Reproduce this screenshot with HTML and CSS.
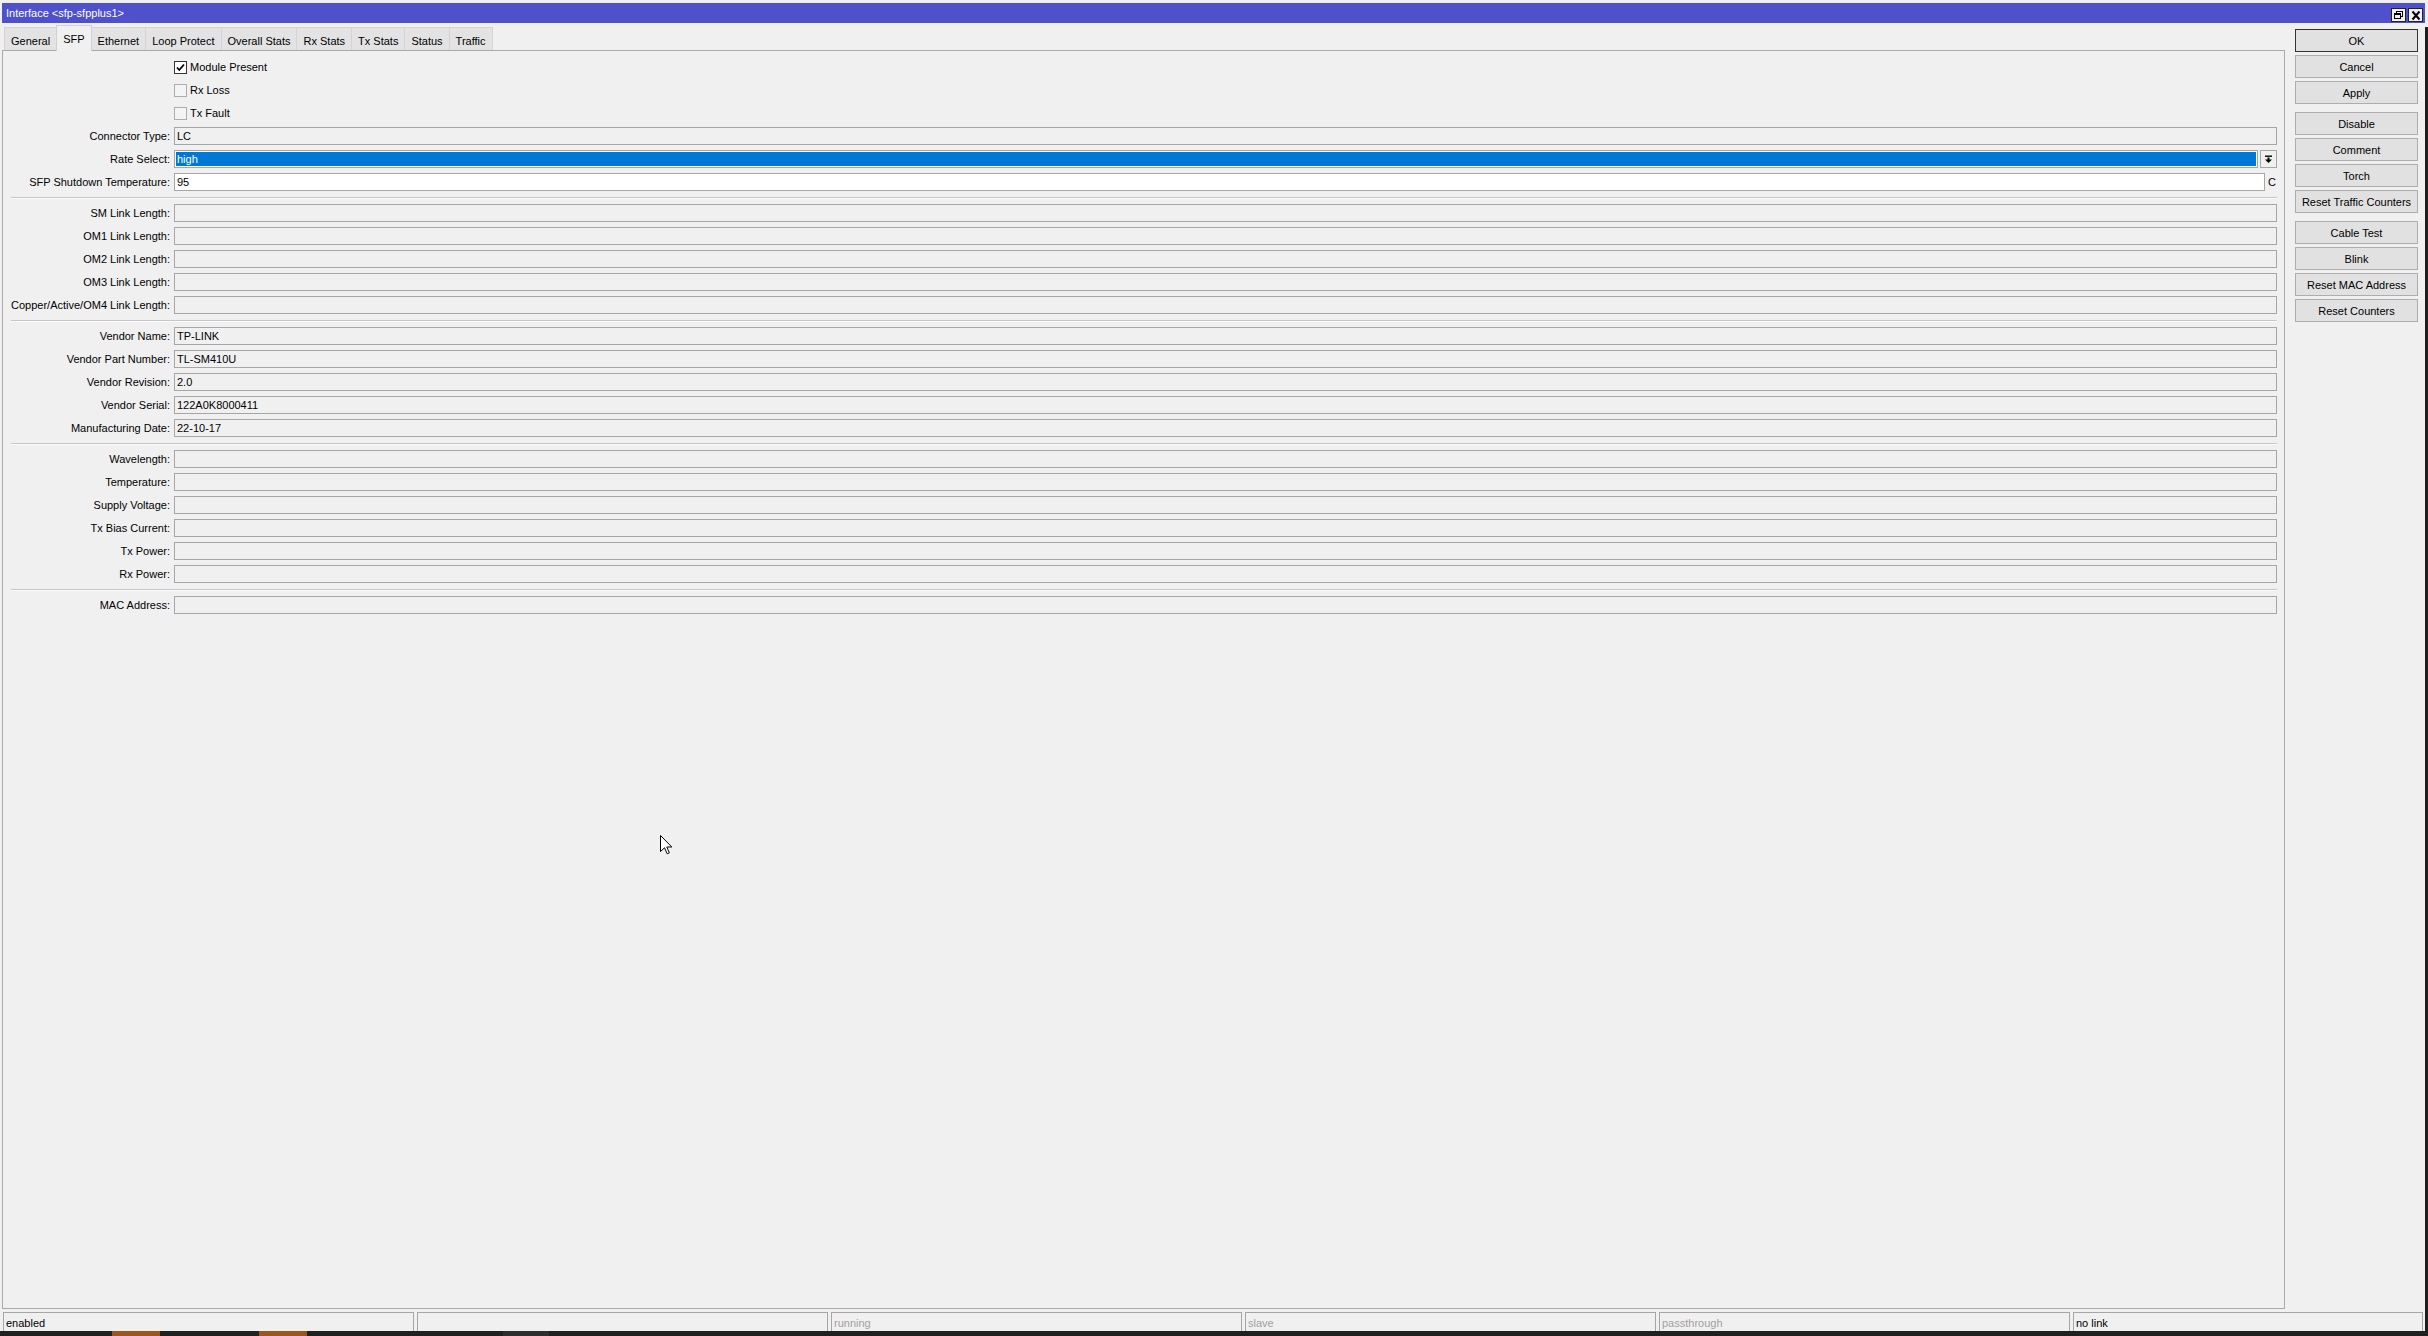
FILE: index.html
```html
<!DOCTYPE html>
<html lang="en">
<head>
    <meta charset="UTF-8">
    <title>Interface &lt;sfp-sfpplus1&gt;</title>
    <link rel="stylesheet" href="styles.css">
</head>
<body>
    <div class="screen">
        <div class="window">
            <div class="titlebar">
                <span class="title">Interface &lt;sfp-sfpplus1&gt;</span>
                <div class="title-buttons">
                    <span class="tbtn">
                        <svg width="12" height="11" viewBox="0 0 12 11"><rect x="3.5" y="1.5" width="6" height="5" fill="none" stroke="#000"/><rect x="1.5" y="3.5" width="6" height="5" fill="#f0f0f0" stroke="#000"/><line x1="1.5" y1="4.5" x2="7.5" y2="4.5" stroke="#000"/></svg>
                    </span>
                    <span class="tbtn">
                        <svg width="12" height="11" viewBox="0 0 12 11"><path d="M2.5 1.5 L9.5 9.5 M9.5 1.5 L2.5 9.5" stroke="#000" stroke-width="2"/></svg>
                    </span>
                </div>
            </div>

            <div class="window-body">
                <div class="main">
                    <div class="tabs">
                        <div class="tab">General</div>
                        <div class="tab active">SFP</div>
                        <div class="tab">Ethernet</div>
                        <div class="tab">Loop Protect</div>
                        <div class="tab">Overall Stats</div>
                        <div class="tab">Rx Stats</div>
                        <div class="tab">Tx Stats</div>
                        <div class="tab">Status</div>
                        <div class="tab">Traffic</div>
                    </div>

                    <div class="panel">
                        <div class="form">
                            <!-- flags -->
                            <div class="label"></div>
                            <div class="check-row">
                                <span class="checkbox checked">
                                    <svg width="11" height="11" viewBox="0 0 11 11"><path d="M2 5.5 L4.3 8 L9 2.5" fill="none" stroke="#000" stroke-width="1.8"/></svg>
                                </span>
                                <span>Module Present</span>
                            </div>
                            <div class="label"></div>
                            <div class="check-row"><span class="checkbox"></span><span>Rx Loss</span></div>
                            <div class="label"></div>
                            <div class="check-row"><span class="checkbox"></span><span>Tx Fault</span></div>

                            <div class="label">Connector Type:</div>
                            <div class="field">LC</div>
                            <div class="label">Rate Select:</div>
                            <div class="field-group">
                                <div class="field selected">high</div>
                                <span class="drop-btn">
                                    <svg width="9" height="9" viewBox="0 0 9 9"><rect x="1" y="0.5" width="7" height="1.4" fill="#000"/><rect x="3.5" y="2.5" width="2" height="2.5" fill="#000"/><path d="M1 4.5 H8 L4.5 8 Z" fill="#000"/></svg>
                                </span>
                            </div>
                            <div class="label">SFP Shutdown Temperature:</div>
                            <div class="field-group">
                                <div class="field editable">95</div>
                                <span class="unit">C</span>
                            </div>

                            <div class="sep"></div>

                            <div class="label">SM Link Length:</div>
                            <div class="field"></div>
                            <div class="label">OM1 Link Length:</div>
                            <div class="field"></div>
                            <div class="label">OM2 Link Length:</div>
                            <div class="field"></div>
                            <div class="label">OM3 Link Length:</div>
                            <div class="field"></div>
                            <div class="label">Copper/Active/OM4 Link Length:</div>
                            <div class="field"></div>

                            <div class="sep"></div>

                            <div class="label">Vendor Name:</div>
                            <div class="field">TP-LINK</div>
                            <div class="label">Vendor Part Number:</div>
                            <div class="field">TL-SM410U</div>
                            <div class="label">Vendor Revision:</div>
                            <div class="field">2.0</div>
                            <div class="label">Vendor Serial:</div>
                            <div class="field">122A0K8000411</div>
                            <div class="label">Manufacturing Date:</div>
                            <div class="field">22-10-17</div>

                            <div class="sep"></div>

                            <div class="label">Wavelength:</div>
                            <div class="field"></div>
                            <div class="label">Temperature:</div>
                            <div class="field"></div>
                            <div class="label">Supply Voltage:</div>
                            <div class="field"></div>
                            <div class="label">Tx Bias Current:</div>
                            <div class="field"></div>
                            <div class="label">Tx Power:</div>
                            <div class="field"></div>
                            <div class="label">Rx Power:</div>
                            <div class="field"></div>

                            <div class="sep"></div>

                            <div class="label">MAC Address:</div>
                            <div class="field"></div>
                        </div>
                    </div>
                </div>

                <div class="actions">
                    <div class="btn-group">
                        <button class="btn btn-default">OK</button>
                        <button class="btn">Cancel</button>
                        <button class="btn">Apply</button>
                    </div>
                    <div class="btn-group">
                        <button class="btn">Disable</button>
                        <button class="btn">Comment</button>
                        <button class="btn">Torch</button>
                        <button class="btn">Reset Traffic Counters</button>
                    </div>
                    <div class="btn-group">
                        <button class="btn">Cable Test</button>
                        <button class="btn">Blink</button>
                        <button class="btn">Reset MAC Address</button>
                        <button class="btn">Reset Counters</button>
                    </div>
                </div>
            </div>

            <div class="statusbar">
                <div class="status-cell">enabled</div>
                <div class="status-cell"></div>
                <div class="status-cell muted">running</div>
                <div class="status-cell muted">slave</div>
                <div class="status-cell muted">passthrough</div>
                <div class="status-cell last">no link</div>
            </div>
        </div>
        <div class="edge"></div>
    </div>

    <div class="taskbar">
        <span class="task task-active"></span>
        <span class="task task-active"></span>
        <span class="task task-dim"></span>
    </div>

    <svg class="cursor" width="13" height="20" viewBox="0 0 13 20">
        <path d="M0.5 0.5 L0.5 16.5 L4.5 12.8 L7.2 18.8 L9.4 17.8 L6.8 12 L11.8 12 Z" fill="#fff" stroke="#000" stroke-width="1" stroke-linejoin="miter"/>
    </svg>
</body>
</html>
```

FILE: styles.css
```css
html, body {
    margin: 0;
    padding: 0;
}

body {
    width: 2428px;
    height: 1336px;
    overflow: hidden;
    display: flex;
    flex-direction: column;
    background: #f0f0f0;
    font-family: 'Liberation Sans', Arial, sans-serif;
    font-size: 11px;
    color: #000;
    position: relative;
}

.screen {
    flex: 1;
    display: flex;
    min-height: 0;
}

.window {
    flex: 1;
    display: flex;
    flex-direction: column;
    padding: 3px 0 0 2px;
    min-width: 0;
}

.edge {
    width: 3px;
    margin-top: 27px;
    background: #1f1f1f;
}

/* title bar */
.titlebar {
    height: 20px;
    background: #4e50cc;
    color: #fff;
    display: flex;
    align-items: center;
    justify-content: space-between;
    padding: 0 2px 0 4px;
    font-size: 11px;
}

.title-buttons {
    display: flex;
    gap: 2px;
    margin-top: 4px;
}

.tbtn {
    width: 13px;
    height: 12px;
    border: 1px solid #222;
    background: #f0f0f0;
    display: flex;
    align-items: center;
    justify-content: center;
}

/* body */
.window-body {
    flex: 1;
    display: flex;
    margin-top: 2px;
    min-height: 0;
}

.main {
    width: 2283px;
    display: flex;
    flex-direction: column;
    margin-bottom: 3px;
}

.tabs {
    height: 25px;
    display: flex;
    align-items: flex-end;
    padding-left: 2px;
    position: relative;
    z-index: 1;
}

.tab {
    height: 23px;
    box-sizing: border-box;
    padding: 0 6px;
    display: flex;
    align-items: center;
    padding-top: 3px;
    background: #e3e3e3;
    border: 1px solid #d4d4d4;
    border-bottom: none;
    margin-right: -1px;
}

.tab.active {
    height: 26px;
    margin-bottom: -1px;
    padding-top: 0;
    background: #f0f0f0;
    border-color: #d0d0d0;
    position: relative;
    z-index: 2;
}

.panel {
    flex: 1;
    border: 1px solid #a9a9a9;
    padding: 7px 7px 0 0;
}

.form {
    display: grid;
    grid-template-columns: 167px 1fr;
    column-gap: 4px;
    row-gap: 5px;
    grid-auto-rows: auto;
}

.label {
    height: 18px;
    line-height: 18px;
    text-align: right;
    white-space: nowrap;
}

.check-row {
    height: 18px;
    display: flex;
    align-items: center;
    gap: 3px;
}

.checkbox {
    width: 13px;
    height: 13px;
    box-sizing: border-box;
    border: 1px solid #adadad;
    background: #f4f4f4;
    display: flex;
    align-items: center;
    justify-content: center;
}

.checkbox.checked {
    border-color: #333;
    background: #fff;
}

.field {
    height: 18px;
    box-sizing: border-box;
    border: 1px solid #a6a6a6;
    background: #f0f0f0;
    padding: 0 2px;
    line-height: 16px;
    white-space: nowrap;
    overflow: hidden;
}

.field-group {
    display: flex;
    align-items: center;
    gap: 2px;
}

.field-group .field {
    flex: 1;
}

.field.selected {
    background: #0078d7;
    color: #fff;
    box-shadow: inset 0 0 0 1px #fff;
    padding-left: 2px;
}

.field.editable {
    background: #fff;
    margin-right: 1px;
}

.drop-btn {
    width: 17px;
    height: 18px;
    box-sizing: border-box;
    border: 1px solid #a6a6a6;
    background: #f0f0f0;
    display: flex;
    align-items: center;
    justify-content: center;
}

.unit {
    width: 9px;
    text-align: left;
}

.sep {
    grid-column: 1 / -1;
    height: 1px;
    margin: 1px 0 1px 8px;
    background: #c6c6c6;
    box-shadow: 0 1px 0 #fbfbfb;
}

/* side buttons */
.actions {
    flex: 1;
    padding: 4px 7px 0 10px;
    display: flex;
    flex-direction: column;
    gap: 8px;
}

.btn-group {
    display: flex;
    flex-direction: column;
    gap: 3px;
}

.btn {
    height: 23px;
    width: 123px;
    margin: 0;
    padding: 0;
    border: 1px solid #adadad;
    background: #e1e1e1;
    font-family: 'Liberation Sans', Arial, sans-serif;
    font-size: 11px;
    color: #000;
    white-space: nowrap;
}

.btn-default {
    border-color: #333;
}

/* status bar */
.statusbar {
    height: 19px;
    display: flex;
    gap: 3px;
    padding: 0 2px 0 1px;
}

.status-cell {
    width: 411px;
    box-sizing: border-box;
    border: 1px solid #a6a6a6;
    border-bottom: none;
    padding: 3px 0 0 2px;
    line-height: 14px;
    white-space: nowrap;
}

.status-cell.last {
    width: auto;
    flex: 1;
}

.status-cell.muted {
    color: #a0a0a0;
}

/* taskbar strip */
.taskbar {
    height: 5px;
    background: #202020;
    display: flex;
}

.task {
    width: 48px;
    height: 5px;
}

.task-active {
    background: #9a561c;
}

.task-active:first-child {
    margin-left: 112px;
}

.task-active + .task-active {
    margin-left: 99px;
}

.task-dim {
    margin-left: 196px;
    width: 46px;
    background: #2e2e2e;
}

.cursor {
    position: absolute;
    left: 660px;
    top: 835px;
}
```
